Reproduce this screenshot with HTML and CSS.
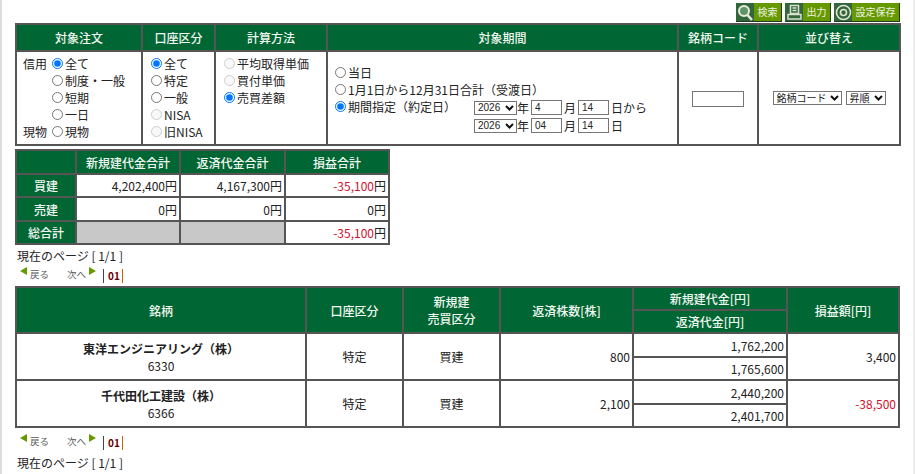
FILE: index.html
```html
<!DOCTYPE html>
<html lang="ja">
<head>
<meta charset="utf-8">
<title>損益</title>
<link rel="stylesheet" href="styles.css">
</head>
<body>
<div class="page">
  <div class="toolbar">
    <a class="tool w46"><span class="tool-ico"><svg width="17" height="17" viewBox="0 0 17 17"><circle cx="7" cy="7" r="5" fill="#5f9468" stroke="#e8eddd" stroke-width="2"/><path d="M10.500 11l4.500 5" stroke="#e8eddd" stroke-width="2.600"/></svg></span><span class="tool-txt">検索</span></a>
    <a class="tool w46"><span class="tool-ico"><svg width="17" height="17" viewBox="0 0 17 17"><path d="M4.500 1.500h8v8h-8zM6.500 4h4M6.500 6.500h4M2 10.500h13v4.500h-13z" fill="none" stroke="#d9e2cf" stroke-width="1.500"/></svg></span><span class="tool-txt">出力</span></a>
    <a class="tool w66"><span class="tool-ico"><svg width="17" height="17" viewBox="0 0 17 17"><circle cx="8.500" cy="8.500" r="7" fill="none" stroke="#dfe6d5" stroke-width="1.600"/><circle cx="8.500" cy="8.500" r="3" fill="none" stroke="#dfe6d5" stroke-width="1.600"/></svg></span><span class="tool-txt">設定保存</span></a>
  </div>

  <table class="grid search">
    <colgroup><col class="s1"><col class="s2"><col class="s3"><col class="s4"><col class="s5"><col class="s6"></colgroup>
    <tr class="search-head"><th>対象注文</th><th>口座区分</th><th>計算方法</th><th>対象期間</th><th>銘柄コード</th><th>並び替え</th></tr>
    <tr>
      <td class="top">
        <div class="opt-grid">
          <span>信用</span><label class="opt"><input type="radio" name="a" checked>全て</label>
          <span></span><label class="opt"><input type="radio" name="a">制度・一般</label>
          <span></span><label class="opt"><input type="radio" name="a">短期</label>
          <span></span><label class="opt"><input type="radio" name="a">一日</label>
          <span>現物</span><label class="opt"><input type="radio" name="a">現物</label>
        </div>
      </td>
      <td class="top">
        <div class="opt-list">
          <label class="opt"><input type="radio" name="b" checked>全て</label>
          <label class="opt"><input type="radio" name="b">特定</label>
          <label class="opt"><input type="radio" name="b">一般</label>
          <label class="opt"><input type="radio" name="b" disabled>NISA</label>
          <label class="opt"><input type="radio" name="b" disabled>旧NISA</label>
        </div>
      </td>
      <td class="top">
        <div class="opt-list">
          <label class="opt"><input type="radio" name="c" disabled>平均取得単価</label>
          <label class="opt"><input type="radio" name="c" disabled>買付単価</label>
          <label class="opt"><input type="radio" name="c" checked>売買差額</label>
        </div>
      </td>
      <td>
        <div class="period">
          <label class="opt"><input type="radio" name="d">当日</label>
          <label class="opt"><input type="radio" name="d">1月1日から12月31日合計（受渡日）</label>
          <div class="period-row">
            <label class="opt period-label"><input type="radio" name="d" checked>期間指定（約定日）</label>
            <div class="dates">
              <div class="date-row"><select class="sel sel-year"><option>2026</option></select>年<input class="num" value="4">月<input class="num" value="14">日から</div>
              <div class="date-row"><select class="sel sel-year"><option>2026</option></select>年<input class="num" value="04">月<input class="num" value="14">日</div>
            </div>
          </div>
        </div>
      </td>
      <td class="center"><input class="code"></td>
      <td class="center"><div class="sort"><select class="sel sel-code"><option>銘柄コード</option></select><select class="sel sel-order"><option>昇順</option></select></div></td>
    </tr>
  </table>

  <table class="grid summary">
    <colgroup><col class="t1"><col class="t2"><col class="t3"><col class="t4"></colgroup>
    <tr class="r24"><th></th><th>新規建代金合計</th><th>返済代金合計</th><th>損益合計</th></tr>
    <tr class="r23"><th>買建</th><td class="num-cell">4,202,400円</td><td class="num-cell">4,167,300円</td><td class="num-cell"><span class="loss">-35,100</span>円</td></tr>
    <tr class="r24"><th>売建</th><td class="num-cell">0円</td><td class="num-cell">0円</td><td class="num-cell">0円</td></tr>
    <tr class="r23"><th>総合計</th><td class="blank"></td><td class="blank"></td><td class="num-cell"><span class="loss">-35,100</span>円</td></tr>
  </table>

  <p class="page-now first">現在のページ [ 1/1 ]</p>
  <div class="pager upper">
    <span class="arrow-l"></span><span class="pg">戻る</span><span class="pg next">次へ</span><span class="arrow-r"></span><span class="pnum">01</span>
  </div>

  <table class="grid detail">
    <colgroup><col class="d1"><col class="d2"><col class="d3"><col class="d4"><col class="d5"><col class="d6"></colgroup>
    <tr class="r23"><th rowspan="2">銘柄</th><th rowspan="2">口座区分</th><th rowspan="2">新規建<br>売買区分</th><th rowspan="2">返済株数[株]</th><th>新規建代金[円]</th><th rowspan="2">損益額[円]</th></tr>
    <tr class="r23"><th>返済代金[円]</th></tr>
    <tr class="r24"><td rowspan="2" class="center name"><b>東洋エンジニアリング（株）</b><br>6330</td><td rowspan="2" class="center">特定</td><td rowspan="2" class="center">買建</td><td rowspan="2" class="num-cell">800</td><td class="num-cell">1,762,200</td><td rowspan="2" class="num-cell">3,400</td></tr>
    <tr class="r23"><td class="num-cell">1,765,600</td></tr>
    <tr class="r24"><td rowspan="2" class="center name"><b>千代田化工建設（株）</b><br>6366</td><td rowspan="2" class="center">特定</td><td rowspan="2" class="center">買建</td><td rowspan="2" class="num-cell">2,100</td><td class="num-cell">2,440,200</td><td rowspan="2" class="num-cell loss">-38,500</td></tr>
    <tr class="r23"><td class="num-cell">2,401,700</td></tr>
  </table>

  <div class="pager lower">
    <span class="arrow-l"></span><span class="pg">戻る</span><span class="pg next">次へ</span><span class="arrow-r"></span><span class="pnum">01</span>
  </div>
  <p class="page-now">現在のページ [ 1/1 ]</p>
</div>
</body>
</html>
```
FILE: styles.css
```css
html, body { margin: 0; padding: 0; height: 100%; overflow: hidden; }
body {
  background: #fff;
  color: #222;
  font: 12px/17px "Noto Sans CJK JP", "Noto Sans", sans-serif;
  border-left: 2px solid #ddd;
  border-right: 2px solid #eee;
  box-sizing: border-box;
}
.page { padding: 3px 0 0 13px; width: 885px; }

.toolbar { display: flex; justify-content: flex-end; gap: 3px; height: 19px; margin-bottom: 1px; }
.tool { display: flex; height: 19px; box-sizing: border-box; border: 1px solid #1f3d1f; border-width: 0 1px 1px 0; background: #669900; color: #eef3e4; }
.w46 { width: 46px; }
.w66 { width: 66px; }
.tool-ico { width: 18px; background: #33663a; display: flex; align-items: center; justify-content: center; flex: none; }
.tool-txt { flex: 1; text-align: center; font-size: 10px; line-height: 18px; white-space: nowrap; }

.grid { border-collapse: collapse; table-layout: fixed; border: 2px solid #555; }
.grid th, .grid td { border: 2px solid #555; padding: 0; }
.grid th { background: #006633; color: #f0f6f0; font-weight: 500; text-align: center; }
.top { vertical-align: top; }
.center { text-align: center; }

.search { width: 884px; }
.s1 { width: 126px; } .s2 { width: 73px; } .s3 { width: 112px; } .s4 { width: 351px; } .s5 { width: 80px; } .s6 { width: 142px; }
.search-head th { height: 25px; }
.search td { height: 92px; }

.opt { display: flex; align-items: center; white-space: nowrap; height: 17px; }
.opt input { appearance: auto; margin: 0 2px 0 0; width: 11px; height: 11px; flex: none; }
.opt-grid { display: grid; grid-template-columns: 29px 1fr; padding: 3px 0 0 6px; }
.opt-grid span { line-height: 17px; }
.opt-list { padding: 3px 0 0 8px; }
.period { padding: 2px 0 0 7px; }
.period-row { display: flex; }
.period-label { width: 139px; }
.dates { display: flex; flex-direction: column; gap: 1px; margin-top: 1px; }
.date-row { display: flex; align-items: center; height: 17px; white-space: nowrap; }
.sel {
  appearance: none;
  font: 10px "Liberation Sans", "Noto Sans CJK JP", sans-serif;
  height: 14px;
  padding: 0 0 0 3px;
  border: 1px solid #767676;
  border-radius: 0;
  color: #222;
  background: #fff url("data:image/svg+xml,%3Csvg xmlns='http://www.w3.org/2000/svg' width='9' height='6'%3E%3Cpath d='M1 1l3.500 3.500L8 1' fill='none' stroke='%23111' stroke-width='2'/%3E%3C/svg%3E") right 2px center no-repeat;
}
.sel-year { width: 43px; }
.sel-code { width: 69px; }
.sel-order { width: 40px; }
.num { box-sizing: border-box; width: 31px; height: 15px; border: 1px solid #767676; padding: 0 3px; margin: 0 2px; font: 10px "Liberation Sans", sans-serif; color: #222; }
.code { box-sizing: border-box; width: 52px; height: 16px; border: 1px solid #767676; padding: 0; }
.sort { display: flex; justify-content: center; gap: 4px; }

.summary { width: 373px; margin-top: 3px; }
.t1 { width: 60px; } .t2 { width: 104px; } .t3 { width: 105px; } .t4 { width: 104px; }
.r24 { height: 24px; }
.r23 { height: 23px; }
.num-cell { text-align: right; padding-right: 2px !important; }
.loss { color: #d40f2c; }
.blank { background: #c8c8c8; }

.page-now { margin: 0; padding-left: 2px; height: 17px; }
.page-now.first { margin-top: 2px; }
.pager { display: flex; align-items: flex-start; padding-left: 5px; color: #5a5a5a; font-size: 9.500px; line-height: 14px; }
.pager.upper { margin-top: 2px; height: 18px; }
.pager.lower { margin-top: 5px; height: 21px; }
.pg { margin: 1px 0 0 3px; }
.pg.next { margin: 1px 3px 0 18px; }
.arrow-l { width: 0; height: 0; border: 4px solid transparent; border-left-width: 0; border-right: 7px solid #669900; margin-top: 1px; }
.arrow-r { width: 0; height: 0; border: 4px solid transparent; border-right-width: 0; border-left: 7px solid #669900; margin-top: 1px; }
.pnum { margin-left: 7px; margin-top: 3px; border-left: 1px solid #444; border-right: 1px solid #c60; padding: 0 2px 0 4px; font-weight: 700; color: #660000; font-size: 10px; line-height: 14px; }

.detail { width: 883px; margin-top: 2px; }
.d1 { width: 290px; } .d2 { width: 97px; } .d3 { width: 97px; } .d4 { width: 133px; } .d5 { width: 154px; } .d6 { width: 112px; }
.name { line-height: 17px; }
```
